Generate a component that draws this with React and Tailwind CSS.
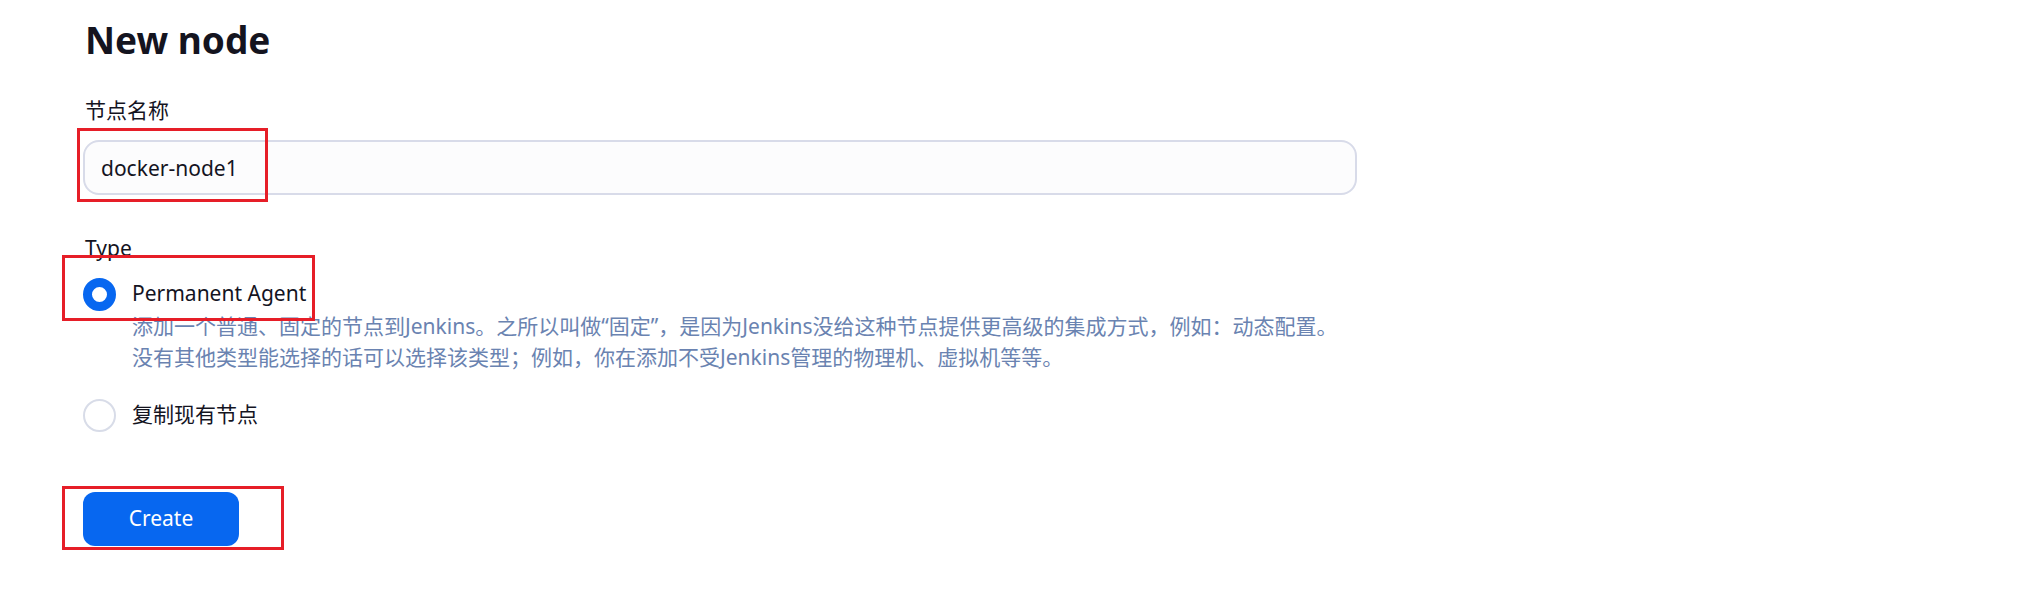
import React from 'react';

const font = { fontFamily: '"Noto Sans", "Noto Sans CJK SC", sans-serif' };

export default function App() {
  return (
    <div className="relative min-h-[603px] w-[2040px] bg-white text-[#14141f]" style={font}>
      <div className="w-[1357px] pl-[83px] pt-[17px]">
        <h1 className="pl-[2px] text-[37px] font-bold leading-[46px]">New node</h1>

        {/* Node name */}
        <label className="mt-[33px] block pl-[2px] text-[21px] leading-[28px]">节点名称</label>
        <input
          className="mt-[16px] block h-[55px] w-full rounded-[16px] border-2 border-[#d8dbe9] bg-[#fcfcfd] px-[16px] text-[21px] text-[#14141f] outline-none"
          defaultValue="docker-node1"
          style={font}
        />

        {/* Type */}
        <div className="mt-[39px] pl-[2px] text-[21px] leading-[28px]">Type</div>

        <div className="mt-[15px] flex h-[34px] items-center gap-[16px]">
          <span className="block h-[33px] w-[33px] shrink-0 rounded-full border-[9px] border-[#0767f0] bg-white" />
          <span className="text-[21px]">Permanent Agent</span>
        </div>
        <div className="pl-[49px] text-[21px] leading-[31px] text-[#6a83b1]">
          <div>添加一个普通、固定的节点到Jenkins。之所以叫做“固定”，是因为Jenkins没给这种节点提供更高级的集成方式，例如：动态配置。</div>
          <div>没有其他类型能选择的话可以选择该类型；例如，你在添加不受Jenkins管理的物理机、虚拟机等等。</div>
        </div>

        <div className="mt-[25px] flex h-[34px] items-center gap-[16px]">
          <span className="block h-[33px] w-[33px] shrink-0 rounded-full border-2 border-[#d8dce8] bg-white" />
          <span className="text-[21px]">复制现有节点</span>
        </div>

        <button className="mt-[60px] h-[54px] w-[156px] rounded-[12px] bg-[#0767f0] text-[21px] text-white">
          Create
        </button>
      </div>

      {/* annotation boxes */}
      <div className="absolute left-[77px] top-[128px] h-[74px] w-[191px] border-[3px] border-[#e61e28]" />
      <div className="absolute left-[62px] top-[255px] h-[66px] w-[253px] border-[3px] border-[#e61e28]" />
      <div className="absolute left-[62px] top-[486px] h-[64px] w-[222px] border-[3px] border-[#e61e28]" />
    </div>
  );
}
